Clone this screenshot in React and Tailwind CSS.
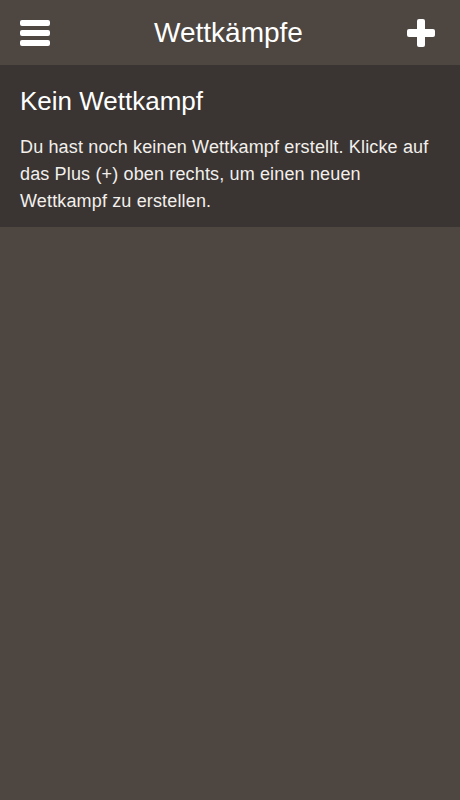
import React from 'react';

export default function App() {
  return (
    <div className="min-h-[800px] w-full bg-[#4d4641] font-['Liberation_Sans',Arial,sans-serif] text-white">
      {/* Top bar */}
      <header className="flex h-[65px] items-center justify-between px-5">
        <button className="flex w-[30px] flex-col gap-[4px]">
          <span className="block h-[6px] w-full rounded-[2px] bg-white" />
          <span className="block h-[6px] w-full rounded-[2px] bg-white" />
          <span className="block h-[6px] w-full rounded-[2px] bg-white" />
        </button>
        <h1 className="text-[28px] leading-none">Wettkämpfe</h1>
        <button className="relative mr-[5px] h-[28px] w-[28px]">
          <span className="absolute left-0 top-[10px] h-[8px] w-full rounded-[2px] bg-white" />
          <span className="absolute left-[10px] top-0 h-full w-[8px] rounded-[2px] bg-white" />
        </button>
      </header>

      {/* Empty state */}
      <section className="bg-[#3a3532] px-5 pt-[21px] pb-[12px]">
        <h2 className="text-[26px] leading-[30px]">Kein Wettkampf</h2>
        <p className="mt-[18px] text-[18px] leading-[27px] tracking-[0.15px] text-[#f2efec]">
          Du hast noch keinen Wettkampf erstellt. Klicke auf das Plus (+) oben rechts, um einen neuen Wettkampf zu erstellen.
        </p>
      </section>
    </div>
  );
}
